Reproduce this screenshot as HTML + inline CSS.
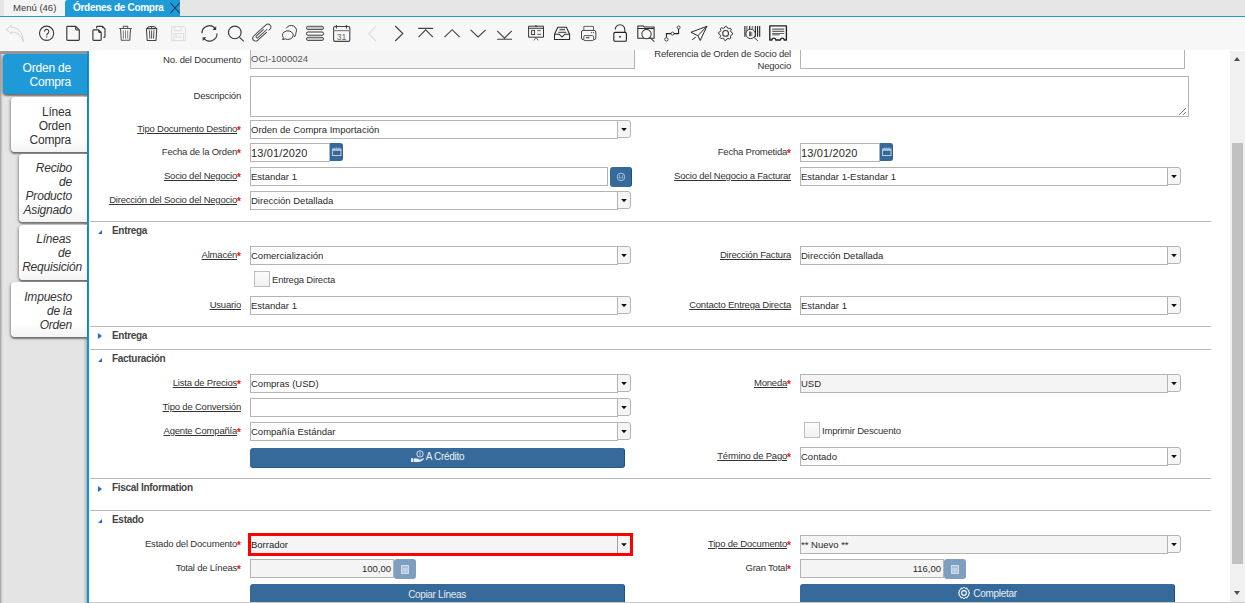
<!DOCTYPE html><html><head><meta charset='utf-8'><style>
*{box-sizing:border-box;margin:0;padding:0}
html,body{width:1245px;height:603px;overflow:hidden}
body{position:relative;background:#fff;font-family:"Liberation Sans",sans-serif;color:#333}
.a{position:absolute}
.lbl{position:absolute;font-size:9.5px;letter-spacing:-0.2px;color:#333;white-space:nowrap;text-align:right;line-height:12px}
.lbl u{text-decoration:underline;text-underline-offset:1px}
.req{color:#f01010;font-size:10px;font-weight:bold;letter-spacing:0;position:relative;top:1.5px;margin-left:0}
.fld{position:absolute;height:19px;border:1px solid #b4b4b4;background:#fff;font-size:9.5px;letter-spacing:0px;color:#2a2a2a;line-height:17px;padding-left:0;white-space:nowrap;overflow:hidden}
.ro{background:#f4f4f4}
.cbtn{position:absolute;height:18px;width:14px;border:1px solid #b4b4b4;background:#f5f5f5;border-radius:0 3px 3px 0}
.cbtn:after{content:"";position:absolute;left:3.2px;top:7px;width:5.6px;height:3.2px;background:#111;clip-path:polygon(0 0,100% 0,50% 100%)}
.sec{position:absolute;left:90px;width:1121px;height:1px;background:#b8b8b8}
.hdr{position:absolute;left:112px;font-size:10px;font-weight:bold;color:#444;letter-spacing:-0.3px;line-height:12px}
.tri-open{position:absolute;width:0;height:0;border-left:4.5px solid transparent;border-bottom:4px solid #1f6ad6}
.tri-closed{position:absolute;width:0;height:0;border-top:3px solid transparent;border-bottom:3px solid transparent;border-left:4px solid #1f6ad6}
.btn{position:absolute;background:#356a9b;border-right:1px solid #1f4f7e;border-bottom:1px solid #2a5c8c;border-radius:3px;color:#fff;font-size:10px;letter-spacing:-0.25px;text-align:center;line-height:19px}
.chk{position:absolute;width:16px;height:16px;border:1px solid #bdbdbd;border-radius:0;background:linear-gradient(#fcfcfc,#f0f0f0)}
.tab{position:absolute;background:linear-gradient(#fff 75%,#f3f3f3);border-radius:4px 0 0 4px;font-size:12px;line-height:14px;text-align:right;color:#333;box-shadow:-1px 1px 3px rgba(0,0,0,0.32),0 2px 1.5px rgba(0,0,0,0.36);letter-spacing:-0.2px}
</style></head><body>
<div class="a" style="left:0;top:0;width:1245px;height:17px;background:#e6e6e6"></div>
<div class="a" style="left:4px;top:0;width:61px;height:16px;background:#f4f4f4"></div>
<div class="a" style="left:13px;top:2px;font-size:9.5px;color:#3a3a3a;line-height:12px">Menú (46)</div>
<div class="a" style="left:65px;top:0;width:115px;height:16px;background:#1f9ad9;border-radius:3px 0 0 0"></div>
<div class="a" style="left:73px;top:2px;font-size:10px;font-weight:bold;color:#fff;line-height:12px;letter-spacing:-0.3px">Órdenes de Compra</div>
<svg class="a" style="left:169px;top:2px" width="12" height="12"><path d="M1.5 1 L10.5 11 M10.5 1 L1.5 11" stroke="#1c3347" stroke-width="1.1"/></svg>
<div class="a" style="left:0;top:16px;width:1245px;height:1px;background:#1f9ad9"></div>
<div class="a" style="left:0;top:17px;width:1245px;height:33px;background:#f7f7f7"></div>
<svg class="a" style="left:0;top:0" width="800" height="50"><path d="M6.3 29.5 L11.3 25.3 V27.3 C17.5 27.3 23.3 32 23.3 41.5 C21.5 35.3 17 32 11.3 32 V33.8 Z" fill="none" stroke="#cdcdcd" stroke-width="0.9" stroke-linejoin="round"/><circle cx="46.6" cy="33.3" r="7.1" fill="none" stroke="#3a3a3a" stroke-width="1.15"/><path d="M44.5 31.6 A2.2 2.2 0 1 1 48.3 33 C47.2 33.8 46.7 34.2 46.7 35.4" fill="none" stroke="#3a3a3a" stroke-width="1.05"/><circle cx="46.7" cy="36.9" r="0.65" fill="#3a3a3a"/><path d="M66.8 27.2 Q66.8 26.4 67.6 26.4 H75.7 L79.3 30 V39.5 Q79.3 40.3 78.5 40.3 H67.6 Q66.8 40.3 66.8 39.5 Z M75.7 26.4 V29.2 Q75.7 30 76.5 30 H79.3" fill="none" stroke="#3a3a3a" stroke-width="1.15" stroke-linejoin="round"/><path d="M92.9 30.6 Q92.9 29.8 93.7 29.8 H98.7 L101.2 32.4 V39.5 Q101.2 40.3 100.4 40.3 H93.7 Q92.9 40.3 92.9 39.5 Z M98.7 29.8 V31.6 Q98.7 32.4 99.5 32.4 H101.2" fill="none" stroke="#3a3a3a" stroke-width="1.15" stroke-linejoin="round"/><path d="M96.6 28.6 V27 Q96.6 26.4 97.4 26.4 H102.6 L105 29 V36.6 Q105 37.3 104.2 37.3 H103.4 M102.6 26.4 V28.2" fill="none" stroke="#3a3a3a" stroke-width="1.15" stroke-linejoin="round"/><path d="M119.2 28.5 H131.8 M123.3 28.5 V26.3 H127.7 V28.5 M120.5 28.5 L121.3 40.3 H129.8 L130.6 28.5" fill="none" stroke="#555" stroke-width="1.05" stroke-linejoin="round"/><path d="M123.4 30.4 V38.6 M125.5 30.4 V38.6 M127.7 30.4 V38.6" stroke="#666" stroke-width="0.8"/><path d="M146.4 28.6 L147.2 40.5 H156 L156.8 28.6 Z M147 28.6 Q148 26 151.6 26.6 Q155.2 26 156.2 28.6 M151.6 26.6 V28.6" fill="none" stroke="#444" stroke-width="1.05" stroke-linejoin="round"/><path d="M149.4 30.4 L149.9 38.6 M151.6 30.4 V38.6 M154 30.4 L153.5 38.6" stroke="#444" stroke-width="0.9"/><path d="M171.6 26.6 H184.2 L185.6 28 V40.6 H171.6 Z M174.2 26.6 V30.7 H181.2 V26.6 M173.9 40.6 V33.6 H183.6 V40.6" fill="none" stroke="#dcdcdc" stroke-width="1"/><path d="M175 35.5 H177 M175 37.2 H182" stroke="#dcdcdc" stroke-width="0.9"/><path d="M202 33.3 A7.4 7.4 0 0 1 215.5 29" fill="none" stroke="#3a3a3a" stroke-width="1.15"/><path d="M217 33.6 A7.4 7.4 0 0 1 203.6 38" fill="none" stroke="#3a3a3a" stroke-width="1.15"/><path d="M216.2 26.2 V30 H212.4 Z" fill="#3a3a3a"/><path d="M202.6 37.2 H206.3 L202.6 40.9 Z" fill="#3a3a3a"/><circle cx="234.8" cy="32.4" r="6.3" fill="none" stroke="#3a3a3a" stroke-width="1.15"/><path d="M239.6 37.3 L243.8 41.3" stroke="#3a3a3a" stroke-width="1.15"/><g transform="translate(261.8 32.6) rotate(-42)"><path d="M4 3 H-8.3 A2.9 2.9 0 0 1 -8.3 -2.9 H8.2 A2.9 2.9 0 0 1 8.2 2.9 H6.5 M6.2 1.1 H-6.2 A1.1 1.1 0 0 1 -6.2 -1.1 H3.5" fill="none" stroke="#444" stroke-width="0.95"/></g><path d="M282.6 39.6 L283.4 37.6 A5.4 4.3 0 1 1 285.2 38.9 Z" fill="none" stroke="#3a3a3a" stroke-width="1"/><path d="M286.2 28.4 A5 4.6 0 0 1 296 32.6 Q296 35 294.6 36.6" fill="none" stroke="#3a3a3a" stroke-width="1"/><path d="M293.7 35.6 L295.4 35.9 L294.4 37.3 Z" fill="#3a3a3a"/><rect x="306.4" y="26.3" width="17.2" height="3.2" rx="1.6" fill="#c6c6c6" stroke="#555" stroke-width="1"/><rect x="306.4" y="32" width="17.2" height="3.2" rx="1.6" fill="#ffffff" stroke="#333" stroke-width="1"/><rect x="306.4" y="37.3" width="17.2" height="3.2" rx="1.6" fill="#c6c6c6" stroke="#555" stroke-width="1"/><rect x="333.6" y="26.5" width="16.2" height="14.9" rx="1.3" fill="none" stroke="#444" stroke-width="1.1"/><path d="M333.6 30.6 H349.8" stroke="#888" stroke-width="1.3"/><path d="M336.4 25 V28.6 M346.4 25 V28.6" stroke="#444" stroke-width="1.1"/><text x="341.5" y="39.7" font-size="8.6" font-family="Liberation Sans" text-anchor="middle" fill="#666">31</text><path d="M376 26.4 L368.7 33.7 L376 41" fill="none" stroke="#dcdcdc" stroke-width="1.1"/><path d="M395.2 26 L402.8 33.5 L395.2 41" fill="none" stroke="#444" stroke-width="1.15"/><path d="M418.2 28.3 H433.1 M418.5 37.1 L425.7 29.9 L432.9 37.1" fill="none" stroke="#444" stroke-width="1.15"/><path d="M444.5 37.1 L452.1 29.7 L459.7 37.1" fill="none" stroke="#444" stroke-width="1.15"/><path d="M470.6 29.8 L478.1 37 L485.7 29.8" fill="none" stroke="#444" stroke-width="1.15"/><path d="M497.2 30.9 L504.5 38.1 L511.8 30.9 M497.1 39.2 H512" fill="none" stroke="#444" stroke-width="1.15"/><path d="M528.6 26.2 H543.5 V37.2 H528.6 Z M528.6 28.3 H543.5" fill="none" stroke="#333" stroke-width="1"/><circle cx="536" cy="26.2" r="0.9" fill="#333"/><rect x="531.6" y="30.4" width="3" height="4.2" fill="none" stroke="#333" stroke-width="0.9"/><path d="M537.3 30.6 H540.8 M537.3 34.3 H541" stroke="#444" stroke-width="0.9"/><path d="M536 37.4 L533.8 40.4 M536 37.4 L538.2 40.4" stroke="#555" stroke-width="0.9"/><path d="M557.8 27.3 H566.4 L569.6 34.3 V39.4 H554.5 V34.3 Z M554.5 34.3 H559.3 L562 37 L564.7 34.3 H569.6" fill="none" stroke="#2a2a2a" stroke-width="1.05" stroke-linejoin="round"/><path d="M559.6 29.4 H565 M558.3 32.4 H566.4" stroke="#333" stroke-width="0.9"/><path d="M559 30.9 H565.4" stroke="#aaa" stroke-width="1"/><path d="M583.8 30.4 V26.4 H593.5 V30.4" fill="none" stroke="#555" stroke-width="0.9"/><rect x="581.5" y="30.4" width="14.3" height="9.2" rx="1.6" fill="none" stroke="#444" stroke-width="1"/><rect x="583.8" y="35.6" width="9.8" height="5" rx="1.2" fill="#f7f7f7" stroke="#555" stroke-width="1"/><path d="M586 37.7 H589.5" stroke="#333" stroke-width="1"/><circle cx="591.6" cy="32.6" r="0.55" fill="#333"/><circle cx="593.5" cy="32.6" r="0.55" fill="#333"/><path d="M615.2 29.6 A4.8 4.8 0 0 1 624.8 29.6 V32.2" fill="none" stroke="#333" stroke-width="1.1"/><rect x="613.8" y="32.4" width="12.6" height="8.9" rx="1.3" fill="none" stroke="#222" stroke-width="1.1"/><circle cx="620" cy="36.8" r="1.1" fill="#555"/><path d="M637.8 26 H643.3 L644.3 26.9 H654.1 V38.3 H637.8 Z M637.8 28.5 H654.1" fill="none" stroke="#2a2a2a" stroke-width="1.05" stroke-linejoin="round"/><circle cx="646.5" cy="34.1" r="4.7" fill="#f7f7f7" stroke="#444" stroke-width="1.05"/><path d="M650 37.6 L654.4 41.6" stroke="#444" stroke-width="1.05"/><path d="M666.4 37.6 V33.6 H671 M674 33.6 H678.6 V29.1" fill="none" stroke="#222" stroke-width="1.05"/><circle cx="666.4" cy="39.4" r="1.7" fill="#fff" stroke="#333" stroke-width="0.9"/><circle cx="672.5" cy="33.6" r="1.5" fill="#fff" stroke="#333" stroke-width="0.9"/><circle cx="678.6" cy="27.5" r="1.5" fill="#fff" stroke="#333" stroke-width="0.9"/><path d="M706.9 26.3 L690.9 32.3 L697.9 35.7 L700.2 40.5 Z M706.9 26.3 L697.9 35.7" fill="none" stroke="#2a2a2a" stroke-width="1" stroke-linejoin="round"/><path d="M695.8 37.2 L692.2 39.7" stroke="#333" stroke-width="1"/><path d="M725.26 26.41 L726.63 26.48 L727.49 28.13 L728.48 28.60 L730.30 28.21 L731.22 29.23 L730.66 31.01 L731.03 32.04 L732.59 33.06 L732.52 34.43 L730.87 35.29 L730.40 36.28 L730.79 38.10 L729.77 39.02 L727.99 38.46 L726.96 38.83 L725.94 40.39 L724.57 40.32 L723.71 38.67 L722.72 38.20 L720.90 38.59 L719.98 37.57 L720.54 35.79 L720.17 34.76 L718.61 33.74 L718.68 32.37 L720.33 31.51 L720.80 30.52 L720.41 28.70 L721.43 27.78 L723.21 28.34 L724.24 27.97 Z" fill="none" stroke="#333" stroke-width="1" stroke-linejoin="round"/><circle cx="725.6" cy="33.4" r="2.9" fill="none" stroke="#333" stroke-width="1.05"/><path d="M744.9 25.9 V36.7 M749.7 25.9 V30.5 M755.4 25.9 V36.7 M757.6 25.9 V36.7 M759.7 25.9 V36.7" stroke="#222" stroke-width="1.1"/><path d="M746.8 25.9 V31 M752.5 25.9 V29.5" stroke="#888" stroke-width="1.6"/><circle cx="750.6" cy="33.9" r="4.7" fill="#f7f7f7" stroke="#333" stroke-width="1"/><path d="M750 31.5 V36.3" stroke="#222" stroke-width="1.4"/><path d="M751.7 31.8 V36" stroke="#888" stroke-width="1.2"/><path d="M754 37.4 L757.8 40.8" stroke="#444" stroke-width="1"/><path d="M769.8 25.9 H786.4 V40 H784.2 A1.9 1.9 0 0 0 780.4 40 H775.7 A1.9 1.9 0 0 0 771.9 40 H769.8 Z" fill="none" stroke="#222" stroke-width="1.35" stroke-linejoin="round"/><path d="M772.2 29.2 H784.2 M772.2 31.3 H784.2 M772.2 33.5 H784.2" stroke="#666" stroke-width="1.2"/><path d="M772.2 34.8 H779.6" stroke="#666" stroke-width="1.1"/></svg>
<div class="a" style="left:0;top:51px;width:87px;height:552px;background:linear-gradient(to right,#9c9c9c 0px,#c8c8c8 1.5px,#e4e4e4 3px,#e4e4e4 83px,#c4c4c4 86px,#a4a4a4 87px)"></div>
<div class="a" style="left:0;top:51px;width:87px;height:3px;background:#999"></div>
<div class="a" style="left:87px;top:51px;width:2px;height:552px;background:#0d96dc"></div>
<div class="tab" style="left:3px;top:54px;width:84px;height:40px;background:#1f9ad9;color:#fff;padding:6.5px 16px 0 0">Orden de<br>Compra</div>
<div class="tab" style="left:11px;top:97px;width:76px;height:55px;padding:7.5px 16px 0 0">Línea<br>Orden<br>Compra</div>
<div class="tab" style="left:19px;top:154px;width:68px;height:68px;padding:7px 15px 0 0;font-style:italic">Recibo<br>de<br>Producto<br>Asignado</div>
<div class="tab" style="left:19px;top:225px;width:68px;height:55px;padding:7px 16px 0 0;font-style:italic">Líneas<br>de<br><span style="margin-right:-11px">Requisición</span></div>
<div class="tab" style="left:11px;top:282px;width:76px;height:55px;padding:8px 15px 0 0;font-style:italic">Impuesto<br>de la<br>Orden</div>
<div class="a" style="left:0;top:50px;width:1245px;height:553px;overflow:hidden"><div class="a" style="left:0;top:-50px;width:1245px;height:603px">
<div class="lbl" style="right:1004px;top:54px">No. del Documento</div>
<div class="fld ro" style="left:250px;top:50px;width:385px;height:19px;color:#555;border-top:0;height:19px;line-height:17px">OCI-1000024</div>
<div class="lbl" style="right:454px;top:48px;line-height:12px">Referencia de Orden de Socio del<br>Negocio</div>
<div class="fld" style="left:800px;top:50px;width:385px;height:19px;border-top:0"></div>
<div class="lbl" style="right:1004px;top:90px">Descripción</div>
<div class="fld" style="left:250px;top:76px;width:939px;height:41px;"></div>
<svg class="a" style="left:1177px;top:106px" width="10" height="10"><path d="M2 9 L9 2 M6 9 L9 6" stroke="#777" stroke-width="0.9"/></svg>
<div class="lbl" style="right:1004px;top:123px"><u>Tipo Documento Destino</u><span class="req">*</span></div>
<div class="fld" style="left:250px;top:120px;width:368px;height:19px;">Orden de Compra Importación</div>
<div class="cbtn" style="left:617px;top:120px"></div>
<div class="lbl" style="right:1004px;top:146px">Fecha de la Orden<span class="req">*</span></div>
<div class="fld" style="left:250px;top:143px;width:80px;height:19px;font-size:11px;letter-spacing:0.15px;line-height:18px;padding-left:0">13/01/2020</div>
<div class="a" style="left:330px;top:143px;width:13px;height:18px;background:#346a9b;border-right:1px solid #4a5a6a;border-radius:0 3px 3px 0"></div><svg class="a" style="left:331px;top:146px" width="11" height="11"><rect x="1.5" y="3" width="8.5" height="6.5" fill="none" stroke="#b9cde2" stroke-width="1"/><path d="M1.5 4 H10" stroke="#b9cde2" stroke-width="1.6"/><path d="M3.5 1.5 V3 M5.7 1.5 V3 M7.9 1.5 V3" stroke="#b9cde2" stroke-width="0.8"/></svg>
<div class="lbl" style="right:454px;top:146px">Fecha Prometida<span class="req">*</span></div>
<div class="fld" style="left:800px;top:143px;width:80px;height:19px;font-size:11px;letter-spacing:0.15px;line-height:18px;padding-left:0">13/01/2020</div>
<div class="a" style="left:880px;top:143px;width:13px;height:18px;background:#346a9b;border-right:1px solid #4a5a6a;border-radius:0 3px 3px 0"></div><svg class="a" style="left:881px;top:146px" width="11" height="11"><rect x="1.5" y="3" width="8.5" height="6.5" fill="none" stroke="#b9cde2" stroke-width="1"/><path d="M1.5 4 H10" stroke="#b9cde2" stroke-width="1.6"/><path d="M3.5 1.5 V3 M5.7 1.5 V3 M7.9 1.5 V3" stroke="#b9cde2" stroke-width="0.8"/></svg>
<div class="lbl" style="right:1004px;top:170px"><u>Socio del Negocio</u><span class="req">*</span></div>
<div class="fld" style="left:250px;top:167px;width:358px;height:19px;">Estandar 1</div>
<div class="a" style="left:610px;top:167px;width:22px;height:20px;background:#356a9b;border-right:1px solid #1f4f7e;border-radius:3px"></div>
<svg class="a" style="left:615px;top:171px" width="12" height="12"><circle cx="6" cy="5.9" r="3.8" fill="none" stroke="#a9c1db" stroke-width="1"/><path d="M4.3 3.8 V7.6 M7.7 3.8 V7.6 M4.3 6.2 Q6 8.4 7.7 6.2" fill="none" stroke="#a9c1db" stroke-width="0.8"/></svg>
<div class="lbl" style="right:454px;top:170px"><u>Socio del Negocio a Facturar</u></div>
<div class="fld" style="left:800px;top:167px;width:368px;height:19px;">Estandar 1-Estandar 1</div>
<div class="cbtn" style="left:1167px;top:167px"></div>
<div class="lbl" style="right:1004px;top:194px"><u>Dirección del Socio del Negocio</u><span class="req">*</span></div>
<div class="fld" style="left:250px;top:191px;width:368px;height:19px;">Dirección Detallada</div>
<div class="cbtn" style="left:617px;top:191px"></div>
<div class="sec" style="top:221px"></div>
<div class="tri-open" style="left:97.5px;top:230px"></div>
<div class="hdr" style="top:225px">Entrega</div>
<div class="lbl" style="right:1004px;top:249px"><u>Almacén</u><span class="req">*</span></div>
<div class="fld" style="left:250px;top:246px;width:368px;height:19px;">Comercialización</div>
<div class="cbtn" style="left:617px;top:246px"></div>
<div class="lbl" style="right:454px;top:249px"><u>Dirección Factura</u></div>
<div class="fld" style="left:800px;top:246px;width:368px;height:19px;">Dirección Detallada</div>
<div class="cbtn" style="left:1167px;top:246px"></div>
<div class="chk" style="left:254px;top:271px"></div>
<div class="lbl" style="left:272px;top:274px;text-align:left">Entrega Directa</div>
<div class="lbl" style="right:1004px;top:299px"><u>Usuario</u></div>
<div class="fld" style="left:250px;top:296px;width:368px;height:19px;">Estandar 1</div>
<div class="cbtn" style="left:617px;top:296px"></div>
<div class="lbl" style="right:454px;top:299px"><u>Contacto Entrega Directa</u></div>
<div class="fld" style="left:800px;top:296px;width:368px;height:19px;">Estandar 1</div>
<div class="cbtn" style="left:1167px;top:296px"></div>
<div class="sec" style="top:326px"></div>
<div class="tri-closed" style="left:98px;top:333px"></div>
<div class="hdr" style="top:330px">Entrega</div>
<div class="sec" style="top:349px"></div>
<div class="tri-open" style="left:97.5px;top:358px"></div>
<div class="hdr" style="top:353px">Facturación</div>
<div class="lbl" style="right:1004px;top:377px"><u>Lista de Precios</u><span class="req">*</span></div>
<div class="fld" style="left:250px;top:374px;width:368px;height:19px;">Compras (USD)</div>
<div class="cbtn" style="left:617px;top:374px"></div>
<div class="lbl" style="right:454px;top:377px"><u>Moneda</u><span class="req">*</span></div>
<div class="fld ro" style="left:800px;top:374px;width:368px;height:19px;">USD</div>
<div class="cbtn" style="left:1167px;top:374px"></div>
<div class="lbl" style="right:1004px;top:401px"><u>Tipo de Conversión</u></div>
<div class="fld" style="left:250px;top:398px;width:368px;height:19px;"></div>
<div class="cbtn" style="left:617px;top:398px"></div>
<div class="lbl" style="right:1004px;top:425px"><u>Agente Compañía</u><span class="req">*</span></div>
<div class="fld" style="left:250px;top:422px;width:368px;height:19px;">Compañía Estándar</div>
<div class="cbtn" style="left:617px;top:422px"></div>
<div class="chk" style="left:804px;top:422px"></div>
<div class="lbl" style="left:822px;top:425px;text-align:left">Imprimir Descuento</div>
<div class="btn" style="left:250px;top:448px;width:375px;height:20px;line-height:18px;color:#eef2f6;letter-spacing:-0.3px"><svg style="vertical-align:middle;position:relative;top:-1px;margin-right:1px" width="15" height="14"><circle cx="10" cy="5" r="3.2" fill="none" stroke="#e8eef4" stroke-width="0.9"/><path d="M10 3.3 V6.7" stroke="#e8eef4" stroke-width="0.8"/><path d="M1 9.3 H3 V13 H1 Z M3.6 9.5 Q5 9 7 9.4 L9 10 Q10 10.5 9.3 11 L13.5 9.3 Q14.5 9 13.8 10.3 Q12 12.5 9 13 H3.6 Z" fill="#e8eef4"/></svg>A Crédito</div>
<div class="lbl" style="right:454px;top:450px"><u>Término de Pago</u><span class="req">*</span></div>
<div class="fld" style="left:800px;top:447px;width:368px;height:19px;">Contado</div>
<div class="cbtn" style="left:1167px;top:447px"></div>
<div class="sec" style="top:478px"></div>
<div class="tri-closed" style="left:98px;top:486px"></div>
<div class="hdr" style="top:482px">Fiscal Information</div>
<div class="sec" style="top:510px"></div>
<div class="tri-open" style="left:97.5px;top:519px"></div>
<div class="hdr" style="top:514px">Estado</div>
<div class="lbl" style="right:1004px;top:538px">Estado del Documento<span class="req">*</span></div>
<div class="a" style="left:248px;top:533px;width:385px;height:23px;border:3px solid #ff0000;background:#f5f5f5"></div>
<div class="a" style="left:251px;top:536px;width:300px;height:17px;font-size:9.5px;line-height:17px;color:#222">Borrador</div>
<div class="a" style="left:617px;top:536px;width:1px;height:17px;background:#a0a0a0"></div>
<div class="a" style="left:621.2px;top:543.3px;width:5.6px;height:3.2px;background:#111;clip-path:polygon(0 0,100% 0,50% 100%)"></div>
<div class="lbl" style="right:454px;top:538px"><u>Tipo de Documento</u><span class="req">*</span></div>
<div class="fld ro" style="left:800px;top:535px;width:368px;height:19px;">** Nuevo **</div>
<div class="cbtn" style="left:1167px;top:535px"></div>
<div class="lbl" style="right:1004px;top:562px">Total de Líneas<span class="req">*</span></div>
<div class="fld ro" style="left:250px;top:559px;width:144px;height:19px;text-align:right;padding-right:2px">100,00</div>
<div class="a" style="left:394px;top:559px;width:22px;height:20px;background:#7f9fc1;border-radius:3px"></div>
<svg class="a" style="left:401px;top:565px" width="8" height="9"><rect x="0.5" y="0.5" width="7" height="8" fill="#a9c0d8" stroke="#d0dcea" stroke-width="1"/><rect x="1.5" y="3" width="5" height="4.5" fill="#c0d0e2"/></svg>
<div class="lbl" style="right:454px;top:562px">Gran Total<span class="req">*</span></div>
<div class="fld ro" style="left:800px;top:559px;width:144px;height:19px;text-align:right;padding-right:2px">116,00</div>
<div class="a" style="left:944px;top:559px;width:22px;height:20px;background:#7f9fc1;border-radius:3px"></div>
<svg class="a" style="left:951px;top:565px" width="8" height="9"><rect x="0.5" y="0.5" width="7" height="8" fill="#a9c0d8" stroke="#d0dcea" stroke-width="1"/><rect x="1.5" y="3" width="5" height="4.5" fill="#c0d0e2"/></svg>
<div class="btn" style="left:250px;top:584px;width:375px;height:22px;line-height:21px;color:#e4ebf2;letter-spacing:-0.35px">Copiar Líneas</div>
<div class="btn" style="left:800px;top:584px;width:375px;height:22px;line-height:19px;color:#e8eef4;letter-spacing:-0.3px"><svg style="vertical-align:middle;position:relative;top:-1px;margin-right:2px" width="14" height="14" viewBox="0 0 13 13"><circle cx="6.5" cy="6.5" r="2.2" fill="none" stroke="#fff" stroke-width="1"/><path d="M6.5 1 L7.6 2.4 L9.3 1.8 L9.6 3.5 L11.2 4.1 L10.6 5.7 L12 6.5 L10.6 7.3 L11.2 8.9 L9.6 9.5 L9.3 11.2 L7.6 10.6 L6.5 12 L5.4 10.6 L3.7 11.2 L3.4 9.5 L1.8 8.9 L2.4 7.3 L1 6.5 L2.4 5.7 L1.8 4.1 L3.4 3.5 L3.7 1.8 L5.4 2.4 Z" fill="none" stroke="#fff" stroke-width="0.9"/></svg>Completar</div>
</div></div>
<div class="a" style="left:89px;top:602px;width:1156px;height:1px;background:#cacaca"></div>
<div class="a" style="left:1230px;top:51px;width:15px;height:551px;background:#f0f0f0"></div>
<div class="a" style="left:1232px;top:143px;width:11px;height:421px;background:#c1c1c1"></div>
<div class="a" style="left:1234px;top:57px;width:0;height:0;border-left:3.5px solid transparent;border-right:3.5px solid transparent;border-bottom:4px solid #505050"></div>
<div class="a" style="left:1234px;top:591px;width:0;height:0;border-left:3.5px solid transparent;border-right:3.5px solid transparent;border-top:4px solid #505050"></div>
</body></html>
